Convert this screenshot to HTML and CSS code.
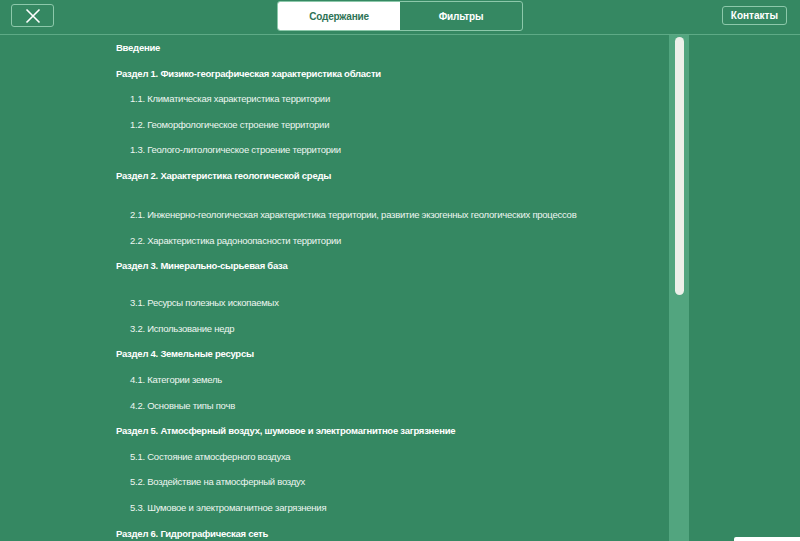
FILE: index.html
```html
<!DOCTYPE html>
<html lang="ru">
<head>
    <meta charset="UTF-8">
    <meta name="viewport" content="width=device-width, initial-scale=1.0">
    <title>Содержание</title>
    <link rel="stylesheet" href="styles.css">
</head>
<body>
    <header class="topbar">
        <div class="left">
            <button class="close-btn" aria-label="Закрыть">
                <svg width="16" height="16" viewBox="0 0 16 16">
                    <path d="M1.5 1.5 L14.5 14.5 M14.5 1.5 L1.5 14.5" stroke="#fff" stroke-width="1.6" fill="none"/>
                </svg>
            </button>
        </div>
        <div class="tabs">
            <div class="tab active">Содержание</div>
            <div class="tab">Фильтры</div>
        </div>
        <div class="right">
            <button class="contacts-btn">Контакты</button>
        </div>
    </header>

    <main class="layout">
        <ul class="toc">
            <li class="section">Введение</li>
            <li class="section">Раздел 1. Физико-географическая характеристика области</li>
            <li class="sub">1.1. Климатическая характеристика территории</li>
            <li class="sub">1.2. Геоморфологическое строение территории</li>
            <li class="sub">1.3. Геолого-литологическое строение территории</li>
            <li class="section spaced">Раздел 2. Характеристика геологической среды</li>
            <li class="sub">2.1. Инженерно-геологическая характеристика территории, развитие экзогенных геологических процессов</li>
            <li class="sub">2.2. Характеристика радоноопасности территории</li>
            <li class="section spaced-sm">Раздел 3. Минерально-сырьевая база</li>
            <li class="sub">3.1. Ресурсы полезных ископаемых</li>
            <li class="sub">3.2. Использование недр</li>
            <li class="section">Раздел 4. Земельные ресурсы</li>
            <li class="sub">4.1. Категории земель</li>
            <li class="sub">4.2. Основные типы почв</li>
            <li class="section">Раздел 5. Атмосферный воздух, шумовое и электромагнитное загрязнение</li>
            <li class="sub">5.1. Состояние атмосферного воздуха</li>
            <li class="sub">5.2. Воздействие на атмосферный воздух</li>
            <li class="sub">5.3. Шумовое и электромагнитное загрязнения</li>
            <li class="section">Раздел 6. Гидрографическая сеть</li>
        </ul>
        <div class="scroll-track">
            <div class="scroll-thumb"></div>
        </div>
        <div class="side"></div>
    </main>

    <div class="corner-card"></div>
</body>
</html>
```

FILE: styles.css
```css
html, body {
    height: 100%;
}

body {
    margin: 0;
    font-family: "Liberation Sans", Arial, sans-serif;
    background-color: #358862;
    color: #fff;
    overflow: hidden;
}

.topbar {
    display: grid;
    grid-template-columns: 1fr auto 1fr;
    align-items: start;
    height: 35px;
    padding: 0 13px 0 11px;
    border-bottom: 1px solid #5eaa86;
    box-sizing: border-box;
}

.right {
    display: flex;
    justify-content: flex-end;
}

.close-btn {
    width: 43px;
    height: 23px;
    margin-top: 4px;
    border: 1px solid #8cc8aa;
    border-radius: 3px;
    background: transparent;
    display: flex;
    align-items: center;
    justify-content: center;
    padding: 0;
    cursor: pointer;
}

.tabs {
    display: flex;
    width: 246px;
    height: 30px;
    margin-top: 1px;
    margin-left: 2px;
    border: 1px solid #8cc8aa;
    border-radius: 3px;
    box-sizing: border-box;
    overflow: hidden;
}

.tab {
    flex: 1;
    display: flex;
    align-items: center;
    justify-content: center;
    font-size: 10px;
    font-weight: bold;
    letter-spacing: -0.2px;
    color: #fff;
}

.tab.active {
    background: #fff;
    color: #2e7356;
}

.contacts-btn {
    margin-top: 6px;
    height: 19px;
    padding: 0 8px;
    border: 1px solid #8cc8aa;
    border-radius: 3px;
    background: transparent;
    color: #fff;
    font-family: "Liberation Sans", Arial, sans-serif;
    font-size: 10px;
    font-weight: bold;
    cursor: pointer;
}

.layout {
    display: flex;
    height: calc(100% - 35px);
}

.toc {
    list-style: none;
    margin: 0;
    padding: 6px 0 0 116px;
    flex: 1;
    font-size: 9.5px;
    letter-spacing: -0.25px;
}

.toc li {
    height: 25.6px;
    line-height: 14px;
    white-space: nowrap;
}

.toc .section {
    font-weight: bold;
}

.toc .sub {
    padding-left: 14px;
    color: #eef6f1;
}

.toc .spaced {
    height: 39px;
}

.toc .spaced-sm {
    height: 37px;
}

.scroll-track {
    width: 20px;
    background: #52a57f;
    display: flex;
    justify-content: center;
    padding-top: 2px;
}

.scroll-thumb {
    width: 9px;
    height: 258px;
    background: #edf0ea;
    border-radius: 5px;
}

.side {
    width: 111px;
}

.corner-card {
    position: absolute;
    left: 734px;
    top: 537px;
    width: 80px;
    height: 20px;
    background: #fff;
    border-radius: 2px;
}
```
